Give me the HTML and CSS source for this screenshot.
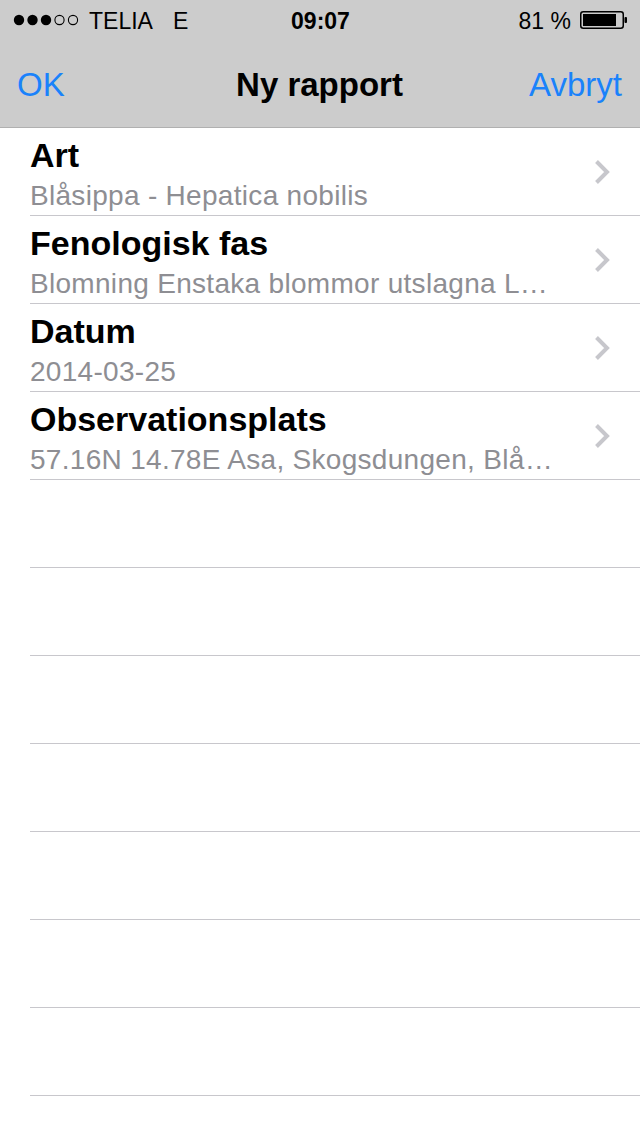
FILE: index.html
```html
<!DOCTYPE html>
<html lang="sv">
<head>
    <meta charset="UTF-8">
    <title>Ny rapport</title>
    <link rel="stylesheet" href="styles.css">
</head>
<body>
<div class="top">
    <div class="status">
        <div class="status-left">
            <svg class="signal" width="68" height="12" viewBox="0 0 68 12">
                <circle cx="6" cy="6" r="5.2" fill="#000"/>
                <circle cx="19.5" cy="6" r="5.2" fill="#000"/>
                <circle cx="33" cy="6" r="5.2" fill="#000"/>
                <circle cx="46.5" cy="6" r="4.6" fill="none" stroke="#000" stroke-width="1.1"/>
                <circle cx="60" cy="6" r="4.6" fill="none" stroke="#000" stroke-width="1.1"/>
            </svg>
            <span>TELIA</span>
            <span class="net">E</span>
        </div>
        <div class="clock">09:07</div>
        <div class="status-right">
            <span>81 %</span>
            <svg class="battery" width="48" height="18" viewBox="0 0 48 18">
                <rect x="0.75" y="0.75" width="42.5" height="16.5" rx="2.5" fill="none" stroke="#000" stroke-width="1.5"/>
                <rect x="3" y="3" width="33" height="12" fill="#000"/>
                <rect x="44.5" y="6" width="2.5" height="6" rx="1" fill="#000"/>
            </svg>
        </div>
    </div>
    <div class="navbar">
        <a class="nav-btn left">OK</a>
        <div class="nav-title">Ny rapport</div>
        <a class="nav-btn right">Avbryt</a>
    </div>
</div>

<ul class="list">
    <li class="row">
        <div class="row-text">
            <div class="row-title">Art</div>
            <div class="row-sub">Blåsippa - Hepatica nobilis</div>
        </div>
        <svg class="chevron" width="16" height="26" viewBox="0 0 16 26"><path d="M2.5 2.5 L13 13 L2.5 23.5" fill="none" stroke="#c7c7cc" stroke-width="4"/></svg>
    </li>
    <li class="row">
        <div class="row-text">
            <div class="row-title">Fenologisk fas</div>
            <div class="row-sub">Blomning Enstaka blommor utslagna L…</div>
        </div>
        <svg class="chevron" width="16" height="26" viewBox="0 0 16 26"><path d="M2.5 2.5 L13 13 L2.5 23.5" fill="none" stroke="#c7c7cc" stroke-width="4"/></svg>
    </li>
    <li class="row">
        <div class="row-text">
            <div class="row-title">Datum</div>
            <div class="row-sub">2014-03-25</div>
        </div>
        <svg class="chevron" width="16" height="26" viewBox="0 0 16 26"><path d="M2.5 2.5 L13 13 L2.5 23.5" fill="none" stroke="#c7c7cc" stroke-width="4"/></svg>
    </li>
    <li class="row">
        <div class="row-text">
            <div class="row-title">Observationsplats</div>
            <div class="row-sub">57.16N 14.78E Asa, Skogsdungen, Blå…</div>
        </div>
        <svg class="chevron" width="16" height="26" viewBox="0 0 16 26"><path d="M2.5 2.5 L13 13 L2.5 23.5" fill="none" stroke="#c7c7cc" stroke-width="4"/></svg>
    </li>
    <li class="row empty"></li>
    <li class="row empty"></li>
    <li class="row empty"></li>
    <li class="row empty"></li>
    <li class="row empty"></li>
    <li class="row empty"></li>
    <li class="row empty"></li>
</ul>
</body>
</html>
```

FILE: styles.css
```css
body {
    margin: 0;
    background-color: #fff;
    font-family: "Liberation Sans", Arial, sans-serif;
    color: #000;
}

.top {
    background-color: #cccccc;
    border-bottom: 1px solid #b0b0b0;
}

.status {
    height: 40px;
    box-sizing: border-box;
    padding: 1px 12px 0 13px;
    display: grid;
    grid-template-columns: 1fr auto 1fr;
    align-items: center;
    font-size: 23px;
    line-height: 24px;
}

.status-left {
    display: flex;
    align-items: center;
}

.signal {
    margin-right: 8px;
    margin-top: -2px;
}

.net {
    margin-left: 20px;
}

.clock {
    font-weight: bold;
}

.status-right {
    display: flex;
    align-items: center;
    justify-content: flex-end;
}

.battery {
    margin-left: 9px;
    margin-top: -2px;
}

.navbar {
    height: 87px;
    box-sizing: border-box;
    padding: 2px 18px 0 17px;
    display: grid;
    grid-template-columns: 1fr auto 1fr;
    align-items: center;
    font-size: 33px;
    line-height: 40px;
}

.nav-btn {
    color: #1a82fb;
}

.nav-btn.right {
    text-align: right;
}

.nav-title {
    font-weight: bold;
}

.list {
    list-style: none;
    margin: 0;
    padding: 0;
}

.row {
    height: 88px;
    box-sizing: border-box;
    margin-left: 30px;
    padding-right: 30px;
    border-bottom: 1px solid #c8c7cc;
    display: flex;
    align-items: center;
}

.row-text {
    flex: 1;
    min-width: 0;
    align-self: flex-start;
    padding-top: 8px;
}

.row-title {
    font-size: 34px;
    font-weight: bold;
    line-height: 38px;
}

.row-sub {
    margin-top: 4px;
    font-size: 28px;
    line-height: 36px;
    letter-spacing: 0.3px;
    color: #8e8e93;
    white-space: nowrap;
    overflow: hidden;
    text-overflow: ellipsis;
}

.chevron {
    margin-left: 30px;
    flex-shrink: 0;
}
```
